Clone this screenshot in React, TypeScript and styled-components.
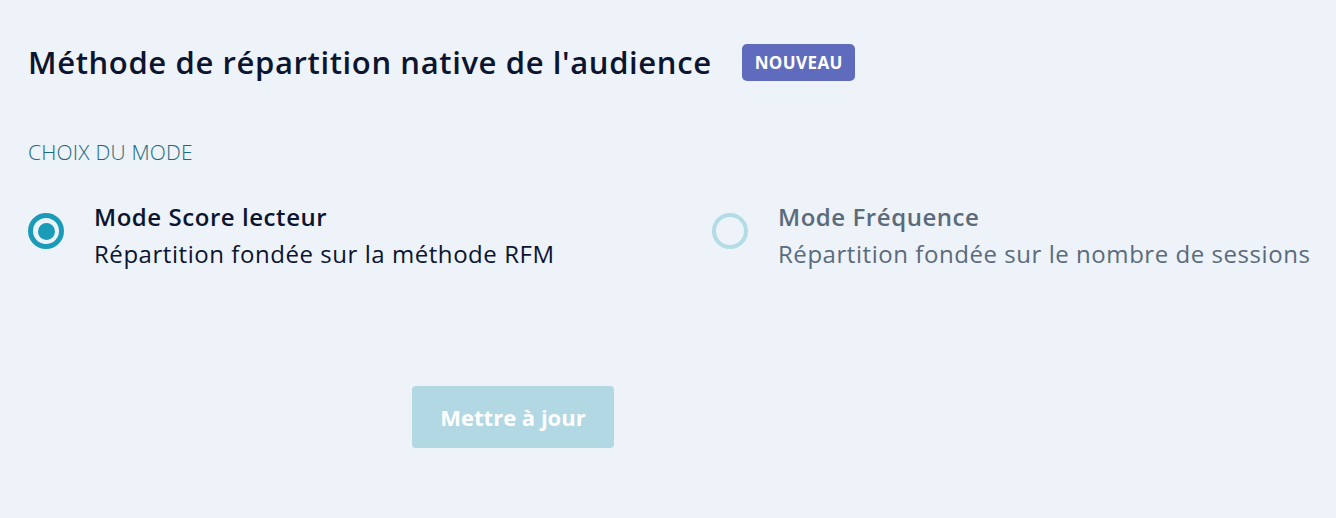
import React, { useState } from "react";
import styled, { createGlobalStyle } from "styled-components";

const GlobalStyle = createGlobalStyle`
  html, body { margin: 0; padding: 0; background: #eef2f9; }
  body { font-family: "Open Sans", "Noto Sans", sans-serif; }
  * { box-sizing: border-box; }
`;

const Page = styled.div`
  width: 1336px;
  height: 518px;
  background: #eef2f9;
  padding: 40px 28px 0 28px;
  display: flex;
  flex-direction: column;
  overflow: hidden;
`;

const Header = styled.div`
  display: flex;
  align-items: center;
  gap: 30px;
`;

const Title = styled.h1`
  margin: 0;
  font-size: 31px;
  font-weight: 600;
  color: #0b1530;
  line-height: 44px;
  letter-spacing: 0.62px;
  white-space: nowrap;
`;

const Badge = styled.span`
  display: inline-flex;
  align-items: center;
  justify-content: center;
  height: 37px;
  padding: 0 12px 0 13px;
  border-radius: 5px;
  background: #5f6cbd;
  color: #ffffff;
  font-size: 17px;
  font-weight: 700;
  letter-spacing: 0.4px;
`;

const SectionLabel = styled.div`
  margin-top: 53px;
  font-size: 21px;
  font-weight: 300;
  color: #1d6a80;
  line-height: 30px;
  letter-spacing: 0.2px;
`;

const Options = styled.div`
  margin-top: 31px;
  display: grid;
  grid-template-columns: 684px 1fr;
`;

const Option = styled.label<{ $active: boolean }>`
  display: flex;
  align-items: flex-start;
  gap: 30px;
  cursor: pointer;
  white-space: nowrap;
  color: ${(p) => (p.$active ? "#0b1530" : "#5a6b7c")};
`;

const Radio = styled.span<{ $active: boolean }>`
  flex: none;
  margin-top: 15px;
  width: 36px;
  height: 36px;
  border-radius: 50%;
  border: ${(p) => (p.$active ? "5px solid #1a9bb8" : "4px solid #b3dce6")};
  display: flex;
  align-items: center;
  justify-content: center;
  &::after {
    content: "";
    display: ${(p) => (p.$active ? "block" : "none")};
    width: 17px;
    height: 17px;
    border-radius: 50%;
    background: #1a9bb8;
  }
`;

const OptionText = styled.div`
  display: flex;
  flex-direction: column;
`;

const OptionTitle = styled.span`
  font-size: 24px;
  font-weight: 600;
  line-height: 37px;
  letter-spacing: 0.55px;
`;

const OptionDesc = styled.span`
  font-size: 24px;
  font-weight: 400;
  line-height: 37px;
  letter-spacing: 0.55px;
`;

const Actions = styled.div`
  margin-top: 114px;
  padding-left: 384px;
`;

const Button = styled.button`
  width: 202px;
  height: 62px;
  border: none;
  border-radius: 4px;
  background: #b2d8e4;
  color: #ffffff;
  font-family: "Open Sans", "Noto Sans", sans-serif;
  font-size: 22px;
  font-weight: 700;
  cursor: not-allowed;
`;

const modes = [
  { id: "score", title: "Mode Score lecteur", desc: "Répartition fondée sur la méthode RFM" },
  { id: "freq", title: "Mode Fréquence", desc: "Répartition fondée sur le nombre de sessions" },
];

export default function App() {
  const [mode, setMode] = useState("score");
  return (
    <>
      <GlobalStyle />
      <Page>
        <Header>
          <Title>Méthode de répartition native de l'audience</Title>
          <Badge>NOUVEAU</Badge>
        </Header>
        <SectionLabel>CHOIX DU MODE</SectionLabel>
        <Options>
          {modes.map((m) => (
            <Option key={m.id} $active={mode === m.id} onClick={() => setMode(m.id)}>
              <Radio $active={mode === m.id} />
              <OptionText>
                <OptionTitle>{m.title}</OptionTitle>
                <OptionDesc>{m.desc}</OptionDesc>
              </OptionText>
            </Option>
          ))}
        </Options>
        <Actions>
          <Button disabled>Mettre à jour</Button>
        </Actions>
      </Page>
    </>
  );
}
